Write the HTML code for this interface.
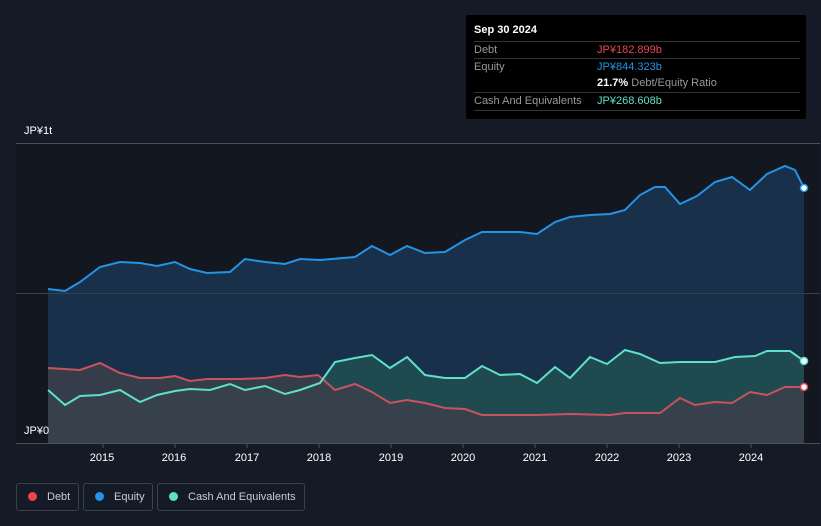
<!DOCTYPE html>
<html><head><meta charset="utf-8"><style>
body{margin:0;width:821px;height:526px;background:#151b26;font-family:"Liberation Sans",sans-serif;overflow:hidden;position:relative}
.t{position:absolute;color:#fff;font-size:11px}
.tip{position:absolute;left:466px;top:15px;width:340px;height:104px;background:#000;border-radius:2px}
.row{position:absolute;left:8px;width:326px;border-top:1px solid #333;font-size:11px;color:#999;height:17px;line-height:17px}
.leg{position:absolute;top:483px;height:26px;border:1px solid #3a414c;border-radius:3px;color:#c8ccd2;font-size:11px;line-height:26px}
.dot{display:inline-block;width:9px;height:9px;border-radius:50%;margin:0 10px 0 11px;vertical-align:-1px}
</style></head><body>
<svg width="821" height="526" style="position:absolute;left:0;top:0">
<rect x="16" y="143" width="804" height="300" fill="#121720"/>
<polygon fill="#18304a" points="48,443 48,289 65,291 80,282 100,267 120,262 140,263 157,266 175,262 190,269 207,273 230,272 245,259 265,262 285,264 300,259 320,260 355,257 372,246 390,255 407,246 425,253 445,252 465,240 482,232 520,232 537,234 555,222 570,217 590,215 610,214 625,210 640,195 655,187 665,187 680,204 697,196 715,182 732,177 750,190 767,174 785,166 795,170 804,188 804,443"/>
<polygon fill="#1f4a50" points="48,443 48,390 65,405 80,396 100,395 120,390 140,402 157,395 175,391 190,389 210,390 230,384 245,390 265,386 285,394 300,390 320,383 335,362 355,358 372,355 390,368 407,357 425,375 445,378 465,378 482,366 500,375 520,374 537,383 555,367 570,378 590,357 607,364 625,350 640,354 660,363 680,362 715,362 735,357 755,356 767,351 790,351 804,361 804,443"/>
<polygon fill="#3c3f4a" opacity="0.85" points="48,443 48,368 80,370 100,363 120,373 140,378 160,378 175,376 190,381 207,379 240,379 265,378 285,375 300,377 318,375 335,390 355,384 372,392 390,403 407,400 425,403 445,408 465,409 482,415 537,415 570,414 610,415 625,413 660,413 680,398 695,405 715,402 732,403 750,392 767,395 785,387 804,387 804,443"/>
<line x1="16" y1="143.5" x2="820" y2="143.5" stroke="#4a505a"/>
<line x1="16" y1="293.5" x2="820" y2="293.5" stroke="#3a404a"/>
<line x1="16" y1="443.5" x2="820" y2="443.5" stroke="#4a505a"/>
<polyline fill="none" stroke="#2394e6" stroke-width="2" points="48,289 65,291 80,282 100,267 120,262 140,263 157,266 175,262 190,269 207,273 230,272 245,259 265,262 285,264 300,259 320,260 355,257 372,246 390,255 407,246 425,253 445,252 465,240 482,232 520,232 537,234 555,222 570,217 590,215 610,214 625,210 640,195 655,187 665,187 680,204 697,196 715,182 732,177 750,190 767,174 785,166 795,170 804,188"/>
<polyline fill="none" stroke="#c9535d" stroke-width="2" points="48,368 80,370 100,363 120,373 140,378 160,378 175,376 190,381 207,379 240,379 265,378 285,375 300,377 318,375 335,390 355,384 372,392 390,403 407,400 425,403 445,408 465,409 482,415 537,415 570,414 610,415 625,413 660,413 680,398 695,405 715,402 732,403 750,392 767,395 785,387 804,387"/>
<polyline fill="none" stroke="#5fe0c8" stroke-width="2" points="48,390 65,405 80,396 100,395 120,390 140,402 157,395 175,391 190,389 210,390 230,384 245,390 265,386 285,394 300,390 320,383 335,362 355,358 372,355 390,368 407,357 425,375 445,378 465,378 482,366 500,375 520,374 537,383 555,367 570,378 590,357 607,364 625,350 640,354 660,363 680,362 715,362 735,357 755,356 767,351 790,351 804,361"/>
<circle cx="804" cy="188" r="3.5" fill="#fff" stroke="#2394e6" stroke-width="1.5"/>
<circle cx="804" cy="361" r="3.5" fill="#fff" stroke="#5fe0c8" stroke-width="1.5"/>
<circle cx="804" cy="387" r="3.5" fill="#fff" stroke="#e8454d" stroke-width="1.5"/>
<g stroke="#4a505a"><line x1="103" y1="443" x2="103" y2="448"/><line x1="175" y1="443" x2="175" y2="448"/><line x1="247" y1="443" x2="247" y2="448"/><line x1="319" y1="443" x2="319" y2="448"/><line x1="391" y1="443" x2="391" y2="448"/><line x1="463" y1="443" x2="463" y2="448"/><line x1="535" y1="443" x2="535" y2="448"/><line x1="607" y1="443" x2="607" y2="448"/><line x1="679" y1="443" x2="679" y2="448"/><line x1="751" y1="443" x2="751" y2="448"/></g>
<g fill="#fff" font-size="11" font-family="Liberation Sans" text-anchor="middle"><text x="102" y="461">2015</text><text x="174" y="461">2016</text><text x="247" y="461">2017</text><text x="319" y="461">2018</text><text x="391" y="461">2019</text><text x="463" y="461">2020</text><text x="535" y="461">2021</text><text x="607" y="461">2022</text><text x="679" y="461">2023</text><text x="751" y="461">2024</text></g>
</svg>
<div class="t" style="left:24px;top:125px">JP¥1t</div>
<div class="t" style="left:24px;top:425px">JP¥0</div>
<div class="tip">
<div style="position:absolute;left:8px;top:9px;color:#fff;font-size:11px;font-weight:bold">Sep 30 2024</div>
<div class="row" style="top:26px">Debt<span style="position:absolute;left:123px;color:#e8454d">JP¥182.899b</span></div>
<div class="row" style="top:43px">Equity<span style="position:absolute;left:123px;color:#2394e6">JP¥844.323b</span></div>
<div class="row" style="top:60px;border-top:none"><span style="position:absolute;left:123px;color:#fff"><b>21.7%</b> <span style="color:#999">Debt/Equity Ratio</span></span></div>
<div class="row" style="top:77px">Cash And Equivalents<span style="position:absolute;left:123px;color:#5fe0c8">JP¥268.608b</span></div>
<div class="row" style="top:95px;height:0"></div>
</div>
<div class="leg" style="left:16px;width:61px"><span class="dot" style="background:#e8454d"></span>Debt</div>
<div class="leg" style="left:83px;width:68px"><span class="dot" style="background:#2394e6"></span>Equity</div>
<div class="leg" style="left:157px;width:146px"><span class="dot" style="background:#5fe0c8"></span>Cash And Equivalents</div>
</body></html>
